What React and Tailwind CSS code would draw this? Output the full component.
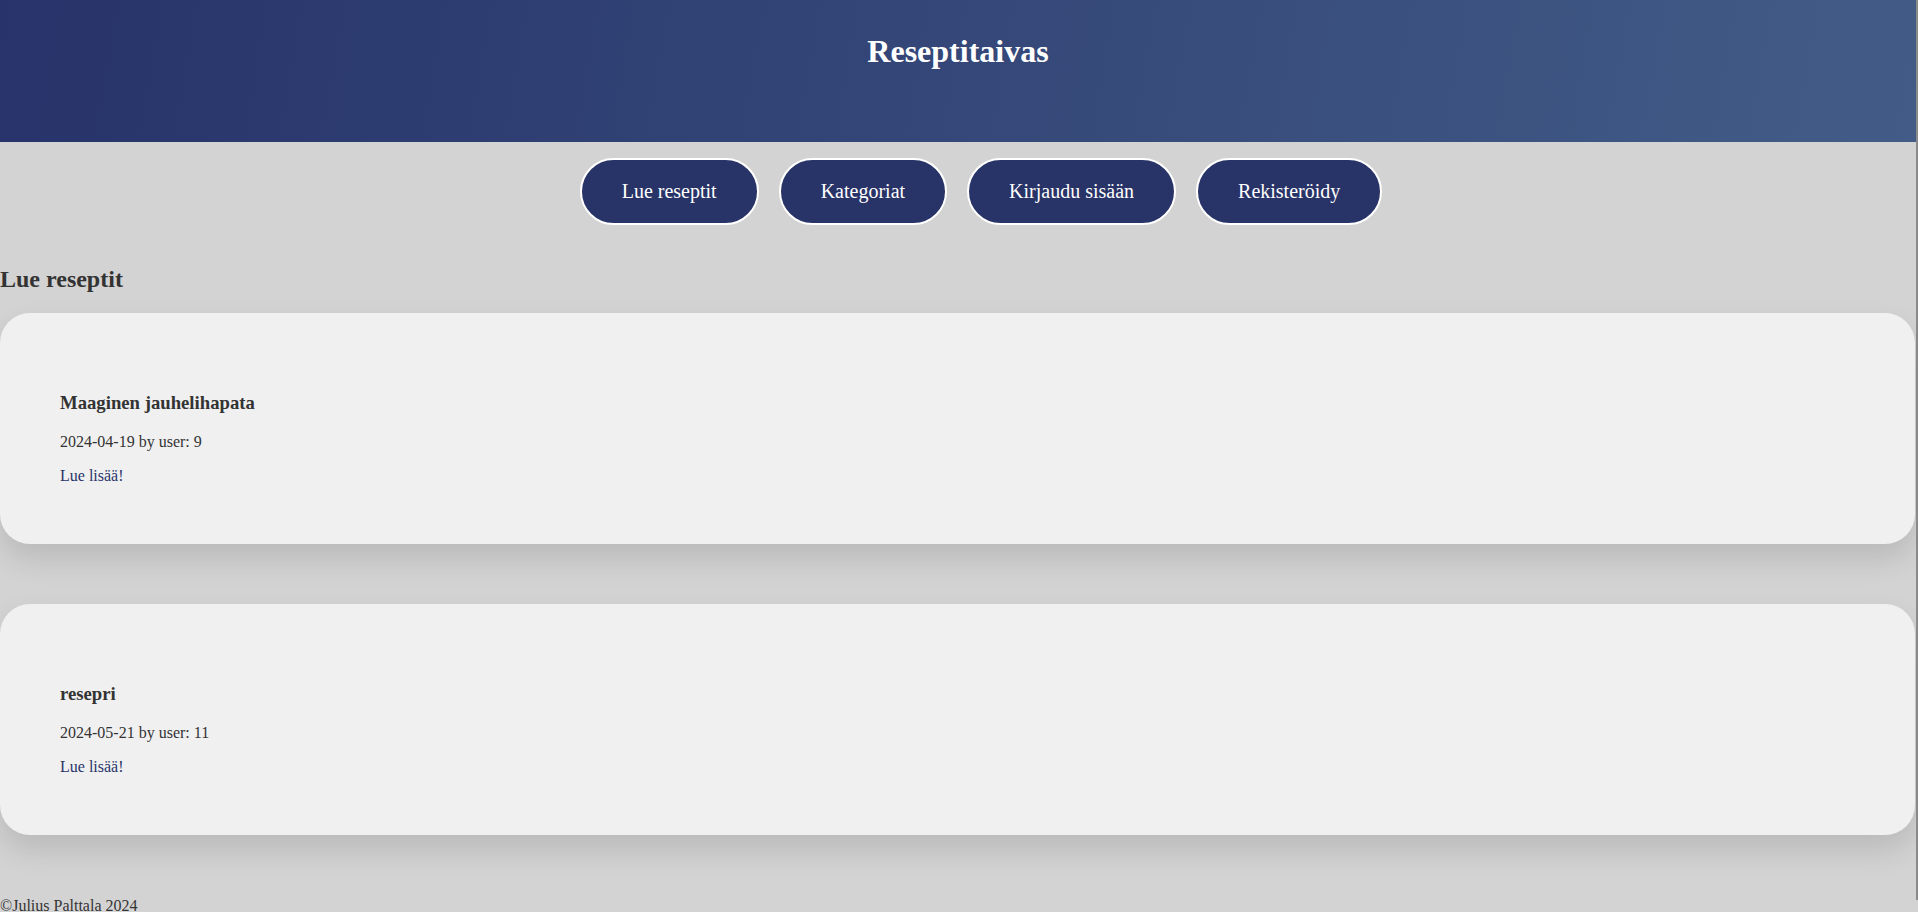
const recipes = [
  { id: 1, title: 'Maaginen jauhelihapata', date: '2024-04-19', user: 9 },
  { id: 2, title: 'resepri', date: '2024-05-21', user: 11 },
]

const links = ['Lue reseptit', 'Kategoriat', 'Kirjaudu sisään', 'Rekisteröidy']

function RecipeCard({ recipe }) {
  return (
    <div className="bg-[#f0f0f0] rounded-[30px] shadow-[0_15px_30px_rgba(0,0,0,0.12)] pl-[60px] pt-[79px] pb-[59px] mr-[3px]">
      <h3 className="text-[18.72px] leading-[22px] font-bold">{recipe.title}</h3>
      <p className="mt-[19px] text-[16px] leading-[18px]">
        {recipe.date} by user: {recipe.user}
      </p>
      <a href="#" className="block mt-[16px] text-[16px] leading-[18px] text-[#283469]">
        Lue lisää!
      </a>
    </div>
  )
}

export default function App() {
  return (
    <div className="relative min-h-[912px] bg-[#d3d3d3] text-[#333] font-['Liberation_Serif',serif] overflow-hidden">
      <header className="h-[142px] bg-linear-[100deg] from-[#27336a] to-[#425c87] pt-[33px] pr-[2px]">
        <h1 className="text-center text-white text-[32px] leading-[37px] font-bold">Reseptitaivas</h1>
      </header>

      <nav className="flex justify-center gap-5 pl-[44px] pt-[16px]">
        {links.map((l) => (
          <a
            key={l}
            href="#"
            className="px-[40px] py-[20px] rounded-[50px] border-2 border-white bg-[#283367] text-white text-[20px] leading-[23px]"
          >
            {l}
          </a>
        ))}
      </nav>

      <main className="pt-[41px]">
        <h2 className="text-[24px] leading-[27px] font-bold">Lue reseptit</h2>
        <div className="mt-[20px] flex flex-col gap-[60px]">
          {recipes.map((r) => (
            <RecipeCard key={r.id} recipe={r} />
          ))}
        </div>
      </main>

      <footer className="mt-[62px] text-[16px] leading-[18px]">©Julius Palttala 2024</footer>

      <div className="absolute right-0 top-0 w-[2px] h-[900px] bg-[#8a8a8a]" />
    </div>
  )
}
